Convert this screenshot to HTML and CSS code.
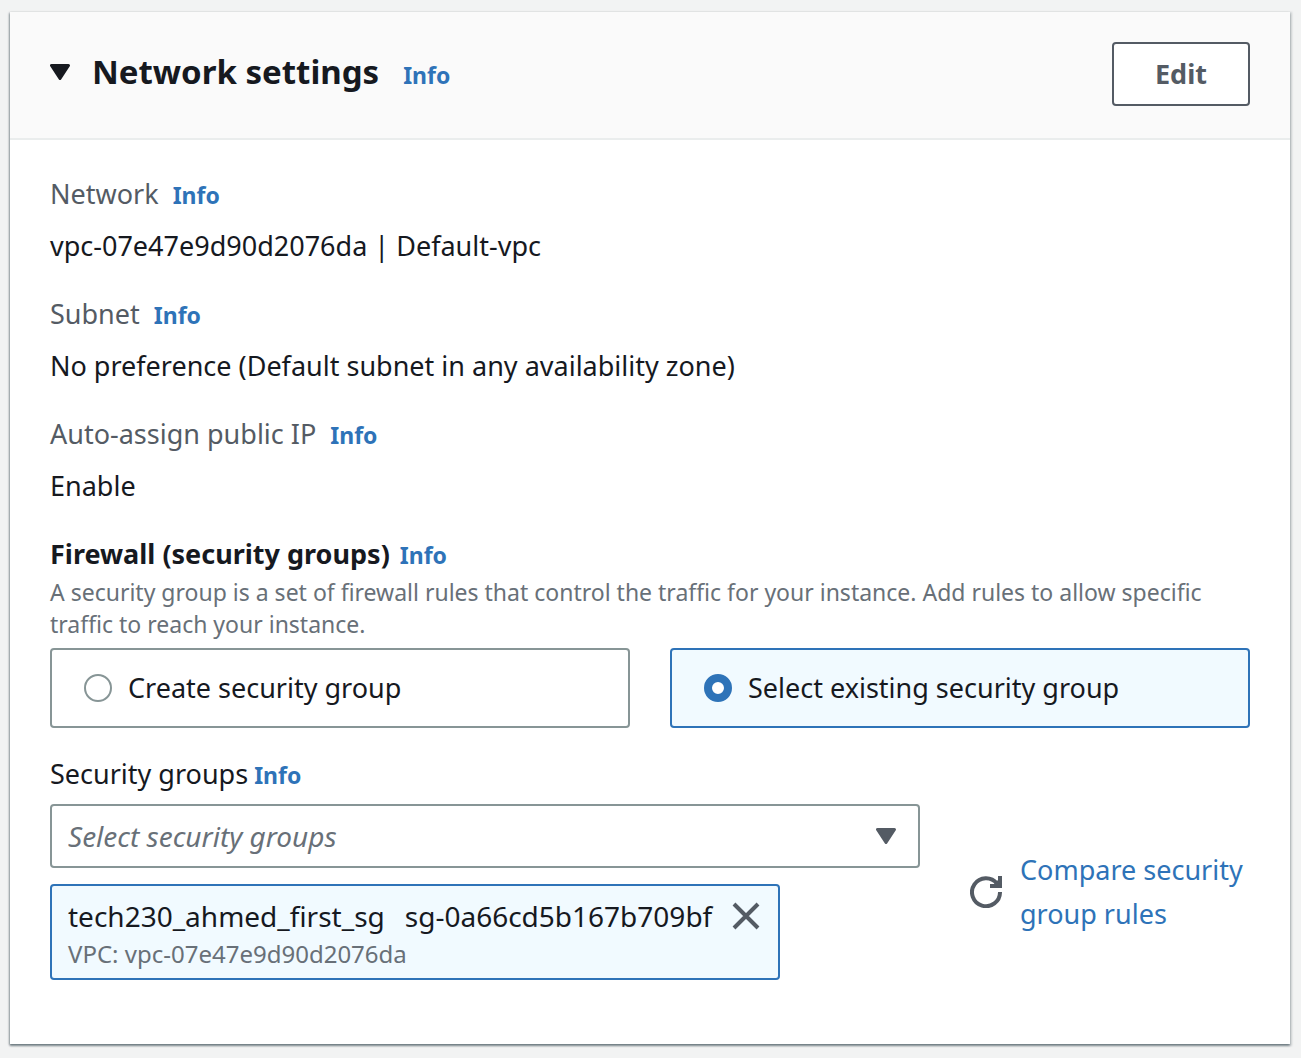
FILE: index.html
```
<!DOCTYPE html>
<html lang="en">
<head>
  <meta charset="utf-8">
  <meta name="viewport" content="width=device-width, initial-scale=1">
  <title>Network settings</title>
  <link rel="stylesheet" href="styles.css">
</head>
<body>
  <section class="panel">
    <header class="panel-header">
      <button class="toggle" type="button" aria-label="Collapse network settings" aria-expanded="true">
        <svg class="caret" viewBox="0 0 20 16" aria-hidden="true"><path d="M1.5 1.5h17L10 14.500z"/></svg>
      </button>
      <h2 class="title">Network settings</h2>
      <a class="info" href="#">Info</a>
      <button class="edit" type="button">Edit</button>
    </header>

    <div class="panel-body">
      <dl class="details">
        <div class="detail">
          <dt class="label-row"><span>Network</span><a class="info" href="#">Info</a></dt>
          <dd class="value">vpc-07e47e9d90d2076da | Default-vpc</dd>
        </div>
        <div class="detail">
          <dt class="label-row"><span>Subnet</span><a class="info" href="#">Info</a></dt>
          <dd class="value">No preference (Default subnet in any availability zone)</dd>
        </div>
        <div class="detail">
          <dt class="label-row"><span>Auto-assign public IP</span><a class="info" href="#">Info</a></dt>
          <dd class="value">Enable</dd>
        </div>
      </dl>

      <div class="firewall" role="radiogroup" aria-labelledby="firewall-title">
        <div class="label-row firewall-title"><h3 id="firewall-title">Firewall (security groups)</h3><a class="info" href="#">Info</a></div>
        <p class="description">A security group is a set of firewall rules that control the traffic for your instance. Add rules to allow specific traffic to reach your instance.</p>
        <div class="tiles">
          <label class="tile"><input class="radio" type="radio" name="firewall" value="create"><span>Create security group</span></label>
          <label class="tile"><input class="radio" type="radio" name="firewall" value="existing" checked><span>Select existing security group</span></label>
        </div>
      </div>

      <div class="groups">
        <div class="label-row groups-label"><label for="groups">Security groups</label><a class="info" href="#">Info</a></div>
        <div class="groups-row">
          <div class="groups-field">
            <div class="select-box">
              <select class="select" id="groups">
                <option value="">Select security groups</option>
              </select>
              <svg class="caret select-caret" viewBox="0 0 20 16" aria-hidden="true"><path d="M1.5 1.5h17L10 14.500z"/></svg>
            </div>
            <div class="token">
              <div class="token-text">
                <div class="token-name"><span>tech230_ahmed_first_sg</span><span>sg-0a66cd5b167b709bf</span></div>
                <div class="token-vpc">VPC: vpc-07e47e9d90d2076da</div>
              </div>
              <button class="icon-button dismiss" type="button" aria-label="Remove tech230_ahmed_first_sg">
                <svg viewBox="0 0 32 32" aria-hidden="true"><path d="M4 4l24 24M28 4L4 28"/></svg>
              </button>
            </div>
          </div>
          <div class="compare">
            <button class="icon-button" type="button" aria-label="Refresh security groups">
              <svg viewBox="0 0 32 32" aria-hidden="true"><path d="M30 16A14 14 0 1 1 27 7.500M30 0v10H20"/><path class="arrowhead" d="M24 8l4-4v4z"/></svg>
            </button>
            <a class="compare-link" href="#">Compare security group rules</a>
          </div>
        </div>
      </div>
    </div>
  </section>
</body>
</html>
```
FILE: styles.css
```
* {
  box-sizing: border-box;
}

body {
  margin: 0;
  padding: 12px 11px 14px 10px;
  background: #f2f3f3;
  color: #16191f;
  font: 400 27px/44px "Noto Sans", "Open Sans", sans-serif;
}

h2, h3, p, dl, dd {
  margin: 0;
}

button, select {
  font: inherit;
  cursor: pointer;
}

a {
  color: #2e73b8;
  text-decoration: none;
}

.panel {
  background: #fff;
  box-shadow: 0 2px 2px rgba(0, 28, 36, 0.3), 1px 1px 2px 1px rgba(0, 28, 36, 0.15), -1px 1px 2px rgba(0, 28, 36, 0.3);
}

.panel-header {
  display: flex;
  align-items: baseline;
  padding: 30px 40px 32px;
  background: #fafafa;
  border-bottom: 2px solid #eaeded;
}

.toggle {
  align-self: center;
  display: flex;
  margin-right: 22px;
  padding: 0 0 4px;
  border: 0;
  background: none;
  color: #16191f;
}

.caret {
  width: 20px;
  height: 16px;
  fill: currentColor;
  stroke: currentColor;
  stroke-width: 3px;
  stroke-linejoin: round;
}

.title {
  margin-right: 24px;
  font-size: 33px;
  line-height: 60px;
}

.info {
  font-size: 23px;
  font-weight: 700;
}

.edit {
  align-self: flex-start;
  margin-left: auto;
  min-width: 138px;
  height: 64px;
  border: 2px solid #545b64;
  border-radius: 4px;
  background: #fff;
  color: #545b64;
  font-weight: 700;
}

.panel-body {
  padding: 32px 40px 64px;
}

.details, .detail {
  display: flex;
  flex-direction: column;
}

.details {
  gap: 24px;
  margin-bottom: 24px;
}

.detail {
  gap: 8px;
}

.label-row {
  display: flex;
  align-items: baseline;
  gap: 14px;
  height: 44px;
  color: #545b64;
}

.firewall-title, .groups-label {
  color: #16191f;
}

.firewall-title {
  gap: 10px;
}

.firewall-title h3 {
  font-size: 27px;
}

.description {
  margin-bottom: 8px;
  color: #687078;
  font-size: 23px;
  line-height: 32px;
}

.tiles {
  display: grid;
  grid-template-columns: 1fr 1fr;
  gap: 40px;
  margin-bottom: 24px;
}

.tile {
  display: flex;
  align-items: center;
  gap: 16px;
  padding: 16px 32px;
  border: 2px solid #879596;
  border-radius: 4px;
  cursor: pointer;
}

.tile:has(:checked) {
  border-color: #2e73b8;
  background: #f1faff;
}

.radio {
  appearance: none;
  width: 28px;
  height: 28px;
  margin: 0;
  border: 2px solid #879596;
  border-radius: 50%;
  background: #fff;
}

.radio:checked {
  border: 8px solid #2e73b8;
}

.groups-label {
  gap: 6px;
  margin-bottom: 8px;
}

.groups-row {
  display: flex;
  align-items: center;
  gap: 50px;
}

.groups-field {
  flex: 1;
}

.select-box {
  display: grid;
  align-items: center;
  margin-bottom: 16px;
}

.select, .select-caret {
  grid-area: 1 / 1;
}

.select {
  appearance: none;
  width: 100%;
  height: 64px;
  padding: 0 60px 0 16px;
  border: 2px solid #879596;
  border-radius: 4px;
  background: #fff;
  color: #687078;
  font-size: 28px;
  font-style: italic;
}

.select-caret {
  justify-self: end;
  margin-right: 24px;
  color: #545b64;
  pointer-events: none;
}

.token {
  display: flex;
  align-items: flex-start;
  gap: 18px;
  width: fit-content;
  padding: 8px 16px;
  border: 2px solid #2e73b8;
  border-radius: 4px;
  background: #f1faff;
}

.token-name {
  display: flex;
  gap: 20px;
  font-size: 28px;
}

.token-vpc {
  color: #687078;
  font-size: 24px;
  line-height: 32px;
}

.icon-button {
  flex: none;
  width: 32px;
  height: 32px;
  padding: 0;
  border: 0;
  background: none;
}

.icon-button svg {
  display: block;
  fill: none;
  stroke: #545b64;
  stroke-width: 4px;
}

.icon-button .arrowhead {
  fill: #545b64;
  stroke: none;
}

.dismiss {
  margin-top: 6px;
}

.compare {
  display: flex;
  align-items: center;
  gap: 18px;
  width: 280px;
}
```
